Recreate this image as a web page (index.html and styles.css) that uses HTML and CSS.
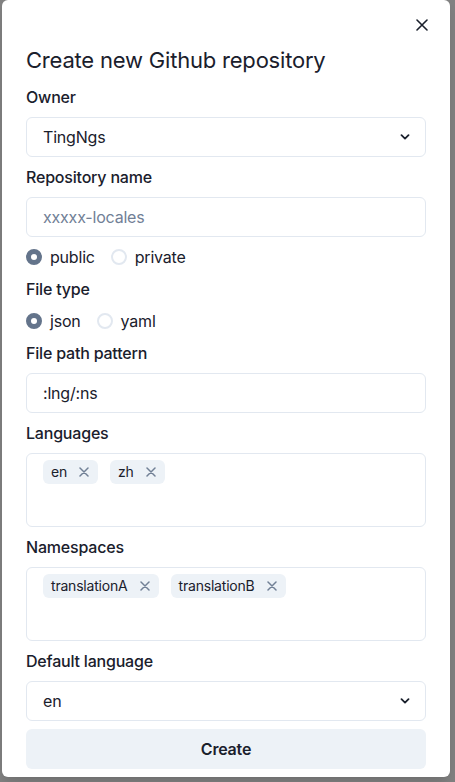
FILE: index.html
```html
<!DOCTYPE html>
<html lang="en">
<head>
<meta charset="utf-8">
<title>Create new Github repository</title>
<link rel="stylesheet" href="styles.css">
</head>
<body>
<div class="modal">
  <button class="close" aria-label="Close">
    <svg width="12" height="12" viewBox="0 0 12 12"><path d="M1 1L11 11M11 1L1 11" stroke="#1A202C" stroke-width="1.6" stroke-linecap="round"/></svg>
  </button>
  <h2 class="title">Create new Github repository</h2>
  <div class="form">
    <div class="field">
      <label class="label">Owner</label>
      <div class="control select"><span>TingNgs</span>
        <svg class="chev" width="10" height="6" viewBox="0 0 10 6"><path d="M1.5 1.2L5 4.6L8.5 1.2" fill="none" stroke="#1A202C" stroke-width="1.8" stroke-linecap="round" stroke-linejoin="round"/></svg>
      </div>
    </div>
    <div class="field">
      <label class="label">Repository name</label>
      <div class="control"><span class="placeholder">xxxxx-locales</span></div>
    </div>
    <div class="radios">
      <span class="radio"><span class="dot checked"></span>public</span>
      <span class="radio"><span class="dot"></span>private</span>
    </div>
    <div class="field">
      <label class="label">File type</label>
      <div class="radios">
        <span class="radio"><span class="dot checked"></span>json</span>
        <span class="radio"><span class="dot"></span>yaml</span>
      </div>
    </div>
    <div class="field">
      <label class="label">File path pattern</label>
      <div class="control"><span>:lng/:ns</span></div>
    </div>
    <div class="field">
      <label class="label">Languages</label>
      <div class="tagbox">
        <span class="tag">en<svg class="tx" width="10" height="10" viewBox="0 0 10 10"><path d="M1 1L9 9M9 1L1 9" stroke="#718096" stroke-width="1.5" stroke-linecap="round"/></svg></span>
        <span class="tag">zh<svg class="tx" width="10" height="10" viewBox="0 0 10 10"><path d="M1 1L9 9M9 1L1 9" stroke="#718096" stroke-width="1.5" stroke-linecap="round"/></svg></span>
      </div>
    </div>
    <div class="field">
      <label class="label">Namespaces</label>
      <div class="tagbox">
        <span class="tag">translationA<svg class="tx" width="10" height="10" viewBox="0 0 10 10"><path d="M1 1L9 9M9 1L1 9" stroke="#718096" stroke-width="1.5" stroke-linecap="round"/></svg></span>
        <span class="tag">translationB<svg class="tx" width="10" height="10" viewBox="0 0 10 10"><path d="M1 1L9 9M9 1L1 9" stroke="#718096" stroke-width="1.5" stroke-linecap="round"/></svg></span>
      </div>
    </div>
    <div class="field">
      <label class="label">Default language</label>
      <div class="control select"><span>en</span>
        <svg class="chev" width="10" height="6" viewBox="0 0 10 6"><path d="M1.5 1.2L5 4.6L8.5 1.2" fill="none" stroke="#1A202C" stroke-width="1.8" stroke-linecap="round" stroke-linejoin="round"/></svg>
      </div>
    </div>
    <button class="create">Create</button>
  </div>
</div>
</body>
</html>
```

FILE: styles.css
```css
* { box-sizing: border-box; }
html, body { margin: 0; padding: 0; }
body {
  background: #818181;
  height: 782px;
  overflow: hidden;
  font-family: Inter, "Liberation Sans", sans-serif;
  color: #1A202C;
  letter-spacing: -0.2px;
}
.modal {
  position: relative;
  width: 448px;
  margin: 0 0 0 2px;
  background: #fff;
  border-radius: 6px;
  padding: 45px 24px 8px;
  box-shadow: 0 10px 15px -3px rgba(0,0,0,0.1), 0 4px 6px -2px rgba(0,0,0,0.05);
}
.close {
  position: absolute;
  top: 9px;
  right: 12px;
  width: 32px;
  height: 32px;
  border: 0;
  background: transparent;
  padding: 0;
  display: flex;
  align-items: center;
  justify-content: center;
}
.title {
  margin: 0 0 10px;
  font-size: 22px;
  font-weight: 400;
  line-height: 30px;
  letter-spacing: -0.2px;
}
.form {
  display: flex;
  flex-direction: column;
  gap: 8px;
}
.field { display: flex; flex-direction: column; }
.label {
  font-size: 16px;
  font-weight: 500;
  line-height: 24px;
  margin-bottom: 8px;
}
.control {
  height: 40px;
  border: 1px solid #E2E8F0;
  border-radius: 6px;
  padding: 0 16px;
  display: flex;
  align-items: center;
  font-size: 16px;
}
.select { justify-content: space-between; padding-right: 15px; }
.placeholder { color: #718096; }
.radios {
  display: flex;
  gap: 16px;
  height: 24px;
  align-items: center;
}
.radio {
  display: flex;
  align-items: center;
  gap: 8px;
  font-size: 16px;
}
.dot {
  width: 16px;
  height: 16px;
  border-radius: 50%;
  border: 2px solid #E2E8F0;
  display: flex;
  align-items: center;
  justify-content: center;
}
.dot.checked {
  background: #64748B;
  border-color: #64748B;
}
.dot.checked::before {
  content: "";
  width: 6px;
  height: 6px;
  border-radius: 50%;
  background: #fff;
}
.tagbox {
  height: 74px;
  border: 1px solid #E2E8F0;
  border-radius: 6px;
  padding: 6px 16px;
  display: flex;
  flex-wrap: wrap;
  align-content: flex-start;
  gap: 12px;
}
.tag {
  height: 24px;
  display: inline-flex;
  align-items: center;
  padding: 0 9px 0 8px;
  border-radius: 6px;
  background: #EDF2F7;
  font-size: 14px;
  line-height: 20px;
}
.tx { margin-left: 12px; }
.create {
  height: 40px;
  border: 0;
  border-radius: 6px;
  background: #EDF2F7;
  font-family: inherit;
  font-size: 16px;
  font-weight: 600;
  color: #1A202C;
  letter-spacing: -0.2px;
}
```
